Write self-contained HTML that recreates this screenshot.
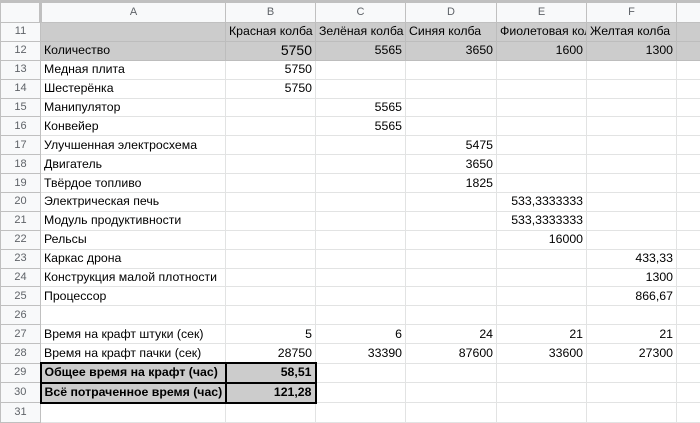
<!DOCTYPE html>
<html><head><meta charset="utf-8"><style>
body{margin:0;width:700px;height:417px;overflow:hidden;background:#fff;font-family:"Liberation Sans",Arial,sans-serif;}
table{border-collapse:collapse;table-layout:fixed;position:absolute;left:0;top:2px;width:700px;}
td{height:17.9px;padding:0 3px;border:1px solid #e2e3e3;font-size:12.3px;white-space:nowrap;overflow:hidden;color:#000;line-height:17px}
td.h{background:#f8f9fa;color:#5f6368;text-align:center;font-size:11px;border-color:#c0c0c0;padding:0}
tr.hd td{height:19px;}
td.n{text-align:right}
tr.g td{background:#cccccc;border-color:#bdbdbd}
tr.g td.h{background:#f8f9fa;border-color:#c0c0c0}
td.b{background:#cccccc;font-weight:bold;border:2px solid #000}
.top{position:absolute;left:0;top:0;width:700px;height:2px;background:#c0c0c0}
</style></head><body>
<div class="top"></div>
<table>
<colgroup><col style="width:40px"><col style="width:185px"><col style="width:90px"><col style="width:90px"><col style="width:91px"><col style="width:90px"><col style="width:90px"><col style="width:24px"></colgroup>
<tr class="hd"><td class="h" style="border-right:3px solid #c0c0c0"></td><td class="h">A</td><td class="h">B</td><td class="h">C</td><td class="h">D</td><td class="h">E</td><td class="h">F</td><td class="h"></td></tr>
<tr class="g"><td class="h">11</td><td></td><td>Красная колба</td><td>Зелёная колба</td><td>Синяя колба</td><td>Фиолетовая колба</td><td>Желтая колба</td><td></td></tr>
<tr class="g"><td class="h">12</td><td>Количество</td><td class="n" style="font-size:14px">5750</td><td class="n">5565</td><td class="n">3650</td><td class="n">1600</td><td class="n">1300</td><td></td></tr>
<tr><td class="h">13</td><td>Медная плита</td><td class="n">5750</td><td></td><td></td><td></td><td></td><td></td></tr>
<tr><td class="h">14</td><td>Шестерёнка</td><td class="n">5750</td><td></td><td></td><td></td><td></td><td></td></tr>
<tr><td class="h">15</td><td>Манипулятор</td><td></td><td class="n">5565</td><td></td><td></td><td></td><td></td></tr>
<tr><td class="h">16</td><td>Конвейер</td><td></td><td class="n">5565</td><td></td><td></td><td></td><td></td></tr>
<tr><td class="h">17</td><td>Улучшенная электросхема</td><td></td><td></td><td class="n">5475</td><td></td><td></td><td></td></tr>
<tr><td class="h">18</td><td>Двигатель</td><td></td><td></td><td class="n">3650</td><td></td><td></td><td></td></tr>
<tr><td class="h">19</td><td>Твёрдое топливо</td><td></td><td></td><td class="n">1825</td><td></td><td></td><td></td></tr>
<tr><td class="h">20</td><td>Электрическая печь</td><td></td><td></td><td></td><td class="n">533,3333333</td><td></td><td></td></tr>
<tr><td class="h">21</td><td>Модуль продуктивности</td><td></td><td></td><td></td><td class="n">533,3333333</td><td></td><td></td></tr>
<tr><td class="h">22</td><td>Рельсы</td><td></td><td></td><td></td><td class="n">16000</td><td></td><td></td></tr>
<tr><td class="h">23</td><td>Каркас дрона</td><td></td><td></td><td></td><td></td><td class="n">433,33</td><td></td></tr>
<tr><td class="h">24</td><td>Конструкция малой плотности</td><td></td><td></td><td></td><td></td><td class="n">1300</td><td></td></tr>
<tr><td class="h">25</td><td>Процессор</td><td></td><td></td><td></td><td></td><td class="n">866,67</td><td></td></tr>
<tr><td class="h">26</td><td></td><td></td><td></td><td></td><td></td><td></td><td></td></tr>
<tr><td class="h">27</td><td>Время на крафт штуки (сек)</td><td class="n">5</td><td class="n">6</td><td class="n">24</td><td class="n">21</td><td class="n">21</td><td></td></tr>
<tr><td class="h">28</td><td>Время на крафт пачки (сек)</td><td class="n">28750</td><td class="n">33390</td><td class="n">87600</td><td class="n">33600</td><td class="n">27300</td><td></td></tr>
<tr><td class="h">29</td><td class="b">Общее время на крафт (час)</td><td class="b n">58,51</td><td></td><td></td><td></td><td></td><td></td></tr>
<tr><td class="h">30</td><td class="b">Всё потраченное время (час)</td><td class="b n">121,28</td><td></td><td></td><td></td><td></td><td></td></tr>
<tr><td class="h">31</td><td></td><td></td><td></td><td></td><td></td><td></td><td></td></tr>
</table>
</body></html>
